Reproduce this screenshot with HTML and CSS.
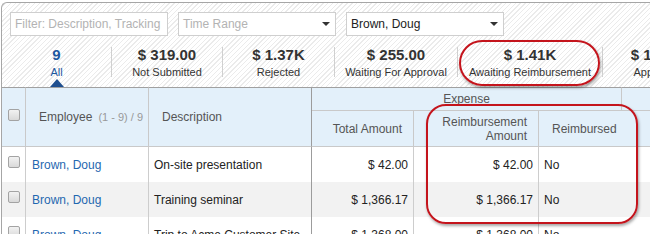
FILE: index.html
```html
<!DOCTYPE html>
<html>
<head>
<meta charset="utf-8">
<link rel="stylesheet" href="styles.css">
</head>
<body>
<div class="frame">
  <div class="toolbar">
    <div class="field placeholder">Filter: Description, Tracking</div>
    <div class="field select placeholder"><span>Time Range</span><span class="caret"></span></div>
    <div class="field select"><span>Brown, Doug</span><span class="caret"></span></div>
  </div>
  <div class="stats">
    <div class="stat active"><div class="num">9</div><div class="lbl">All</div></div>
    <div class="stat"><div class="num">$ 319.00</div><div class="lbl">Not Submitted</div></div>
    <div class="stat"><div class="num">$ 1.37K</div><div class="lbl">Rejected</div></div>
    <div class="stat"><div class="num">$ 255.00</div><div class="lbl">Waiting For Approval</div></div>
    <div class="stat"><div class="num">$ 1.41K</div><div class="lbl">Awaiting Reimbursement</div></div>
    <div class="stat"><div class="num">$ 1.25K</div><div class="lbl">Approved</div></div>
  </div>
  <table class="grid">
    <colgroup>
      <col class="w-cb"><col class="w-emp"><col class="w-desc"><col class="w-total"><col class="w-reimb"><col class="w-flag"><col class="w-rest">
    </colgroup>
    <thead>
      <tr class="top">
        <th rowspan="2" class="cbcell"><span class="cb"></span></th>
        <th rowspan="2" class="emp">Employee<span class="count">(1 - 9) / 9</span></th>
        <th rowspan="2" class="desc">Description</th>
        <th colspan="3" class="group">Expense</th>
        <th class="rest"></th>
      </tr>
      <tr>
        <th class="num-h">Total Amount</th>
        <th class="num-h">Reimbursement<br>Amount</th>
        <th class="flag">Reimbursed</th>
        <th class="rest"></th>
      </tr>
    </thead>
    <tbody>
      <tr>
        <td class="cbcell"><span class="cb"></span></td>
        <td class="emp"><span class="link">Brown, Doug</span></td>
        <td class="desc">On-site presentation</td>
        <td class="amt">$ 42.00</td>
        <td class="amt">$ 42.00</td>
        <td class="flag">No</td>
        <td class="rest"></td>
      </tr>
      <tr class="alt">
        <td class="cbcell"><span class="cb"></span></td>
        <td class="emp"><span class="link">Brown, Doug</span></td>
        <td class="desc">Training seminar</td>
        <td class="amt">$ 1,366.17</td>
        <td class="amt">$ 1,366.17</td>
        <td class="flag">No</td>
        <td class="rest"></td>
      </tr>
      <tr>
        <td class="cbcell"><span class="cb"></span></td>
        <td class="emp"><span class="link">Brown, Doug</span></td>
        <td class="desc">Trip to Acme Customer Site</td>
        <td class="amt">$ 1,368.00</td>
        <td class="amt">$ 1,368.00</td>
        <td class="flag">No</td>
        <td class="rest"></td>
      </tr>
    </tbody>
  </table>
</div>
<div class="mark mark-stat"></div>
<div class="mark mark-cols"></div>
</body>
</html>
```
FILE: styles.css
```css
html, body { margin: 0; padding: 0; }
body {
  width: 650px;
  height: 234px;
  overflow: hidden;
  position: relative;
  background: #fff;
  font-family: "Liberation Sans", Arial, sans-serif;
}
.frame {
  width: 800px;
  margin: 2px 0 0 1px;
  border: 1px solid #a6a6a6;
  border-right: 0;
  border-bottom: 0;
  border-top-left-radius: 6px;
  background-color: #fff;
  background-image: repeating-linear-gradient(135deg, #fff 0 2.4px, #ebebeb 2.4px 3.4px);
}
.toolbar {
  display: flex;
  gap: 10px;
  padding: 9px 0 0 8px;
}
.field {
  box-sizing: border-box;
  width: 158px;
  height: 24px;
  border: 1px solid #cfcfcf;
  background: #fff;
  font-size: 12px;
  line-height: 22px;
  padding: 0 4px;
  color: #222;
  white-space: nowrap;
  overflow: hidden;
}
.select {
  display: flex;
  align-items: center;
  justify-content: space-between;
  padding-right: 5px;
}
.placeholder { color: #b3b3b3; }
.caret {
  width: 0;
  height: 0;
  border-left: 4px solid transparent;
  border-right: 4px solid transparent;
  border-top: 4px solid #333;
}
.stats {
  display: grid;
  grid-template-columns: 109px 111px 112px 123px 145px 109px;
  margin-top: 11px;
  height: 40px;
}
.stat {
  position: relative;
  height: 30px;
  text-align: center;
  border-left: 1px solid #d0d0d0;
  white-space: nowrap;
}
.stat:first-child { border-left: 0; }
.num {
  font-size: 15px;
  font-weight: bold;
  line-height: 15px;
  color: #333;
}
.lbl {
  font-size: 11px;
  line-height: 13px;
  margin-top: 4px;
  color: #333;
}
.active .num, .active .lbl { color: #1d57a0; }
.active::after {
  content: "";
  position: absolute;
  left: 50%;
  top: 32px;
  margin-left: -7px;
  border-left: 7px solid transparent;
  border-right: 7px solid transparent;
  border-bottom: 8px solid #1f4f8f;
}
.grid {
  border-collapse: separate;
  border-spacing: 0;
  table-layout: fixed;
  width: 720px;
  font-size: 12px;
}
.w-cb { width: 24px; }
.w-emp { width: 123px; }
.w-desc { width: 163px; }
.w-total { width: 102px; }
.w-reimb { width: 125px; }
.w-flag { width: 83px; }
.w-rest { width: 100px; }
th {
  background: #e3f0fa;
  color: #555;
  font-weight: normal;
  text-align: left;
  padding: 0 13px;
  line-height: 14px;
  border-bottom: 1px solid #c9c9c9;
  border-right: 1px solid #c9c9c9;
  height: 35px;
  white-space: nowrap;
}
tr.top th { border-top: 1px solid #a0a0a0; height: 22px; }
th.cbcell { padding: 0; text-align: center; }
th.desc, td.desc { border-right-color: #9c9c9c; }
th.group { text-align: center; }
th.num-h { text-align: right; padding-right: 11px; }
th.flag, td.flag { border-right: 0; }
th.rest, td.rest { border-right: 0; padding: 0; }
.count {
  font-size: 11px;
  color: #999;
  margin-left: 6px;
}
td {
  height: 35px;
  padding: 0 5px;
  color: #222;
  border-right: 1px solid #cdcdcd;
  white-space: nowrap;
  background: #fff;
}
tr.alt td { background: #f2f2f2; }
td.cbcell { padding: 0; text-align: center; }
td.emp { padding-left: 6px; }
td.amt { text-align: right; }
.link { color: #1f68b0; }
.cb {
  display: inline-block;
  box-sizing: border-box;
  width: 12px;
  height: 12px;
  border: 1px solid #a3a3a3;
  border-radius: 2px;
  background: linear-gradient(#f2f2f2, #d9d9d9);
  vertical-align: middle;
  margin-bottom: 5px;
}
.mark {
  position: absolute;
  box-sizing: border-box;
  border: 2px solid #c4141c;
  box-shadow: 1px 2px 3px rgba(0, 0, 0, 0.35);
}
.mark-stat {
  left: 459px;
  top: 40px;
  width: 141px;
  height: 46px;
  border-radius: 23px;
}
.mark-cols {
  left: 426px;
  top: 104px;
  width: 212px;
  height: 120px;
  border-radius: 20px;
}
```
